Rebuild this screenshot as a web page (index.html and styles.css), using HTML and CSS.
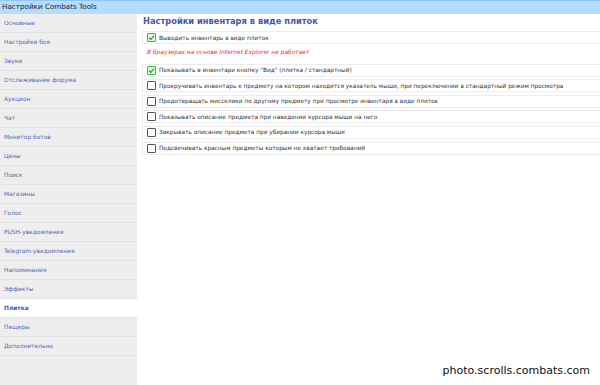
FILE: index.html
```html
<!DOCTYPE html>
<html lang="ru">
<head>
<meta charset="utf-8">
<title>Настройки Combats Tools</title>
<link rel="stylesheet" href="styles.css">
</head>
<body>
<div class="header">Настройки Combats Tools</div>
<div class="layout">
  <nav class="sidebar">
    <div class="nav-item">Основные</div>
    <div class="nav-item">Настройки боя</div>
    <div class="nav-item">Звуки</div>
    <div class="nav-item">Отслеживание форума</div>
    <div class="nav-item">Аукцион</div>
    <div class="nav-item">Чат</div>
    <div class="nav-item">Монитор ботов</div>
    <div class="nav-item">Цены</div>
    <div class="nav-item">Поиск</div>
    <div class="nav-item">Магазины</div>
    <div class="nav-item">Голос</div>
    <div class="nav-item">PUSH-уведомления</div>
    <div class="nav-item">Telegram-уведомления</div>
    <div class="nav-item">Напоминания</div>
    <div class="nav-item">Эффекты</div>
    <div class="nav-item active">Плитка</div>
    <div class="nav-item">Пещеры</div>
    <div class="nav-item">Дополнительно</div>
  </nav>
  <main class="content">
    <h1 class="title">Настройки инвентаря в виде плиток</h1>
    <div class="row"><span class="cb checked"><svg viewBox="0 0 9 9" width="9" height="9"><path d="M2 4.6 L3.8 6.4 L7 2.6" fill="none" stroke="#2fa82f" stroke-width="1.4"/></svg></span>Выводить инвентарь в виде плиток</div>
    <div class="note">В браузерах на основе Internet Explorer не работает</div>
    <div class="row"><span class="cb checked"><svg viewBox="0 0 9 9" width="9" height="9"><path d="M2 4.6 L3.8 6.4 L7 2.6" fill="none" stroke="#2fa82f" stroke-width="1.4"/></svg></span>Показывать в инвентаре кнопку "Вид" (плитка / стандартный)</div>
    <div class="row"><span class="cb"></span>Прокручивать инвентарь к предмету на котором находится указатель мыши, при переключении в стандартный режим просмотра</div>
    <div class="row"><span class="cb"></span>Предотвращать миссклики по другому предмету при просмотре инвентаря в виде плиток</div>
    <div class="row"><span class="cb"></span>Показывать описание предмета при наведении курсора мыши на него</div>
    <div class="row"><span class="cb"></span>Закрывать описание предмета при убирании курсора мыши</div>
    <div class="row"><span class="cb"></span>Подсвечивать красным предметы которым не хватает требований</div>
  </main>
</div>
<div class="watermark">photo.scrolls.combats.com</div>
</body>
</html>
```
FILE: styles.css
```css
* { box-sizing: border-box; }
html, body { margin: 0; padding: 0; height: 100%; }
body {
  font-family: "DejaVu Sans", Verdana, sans-serif;
  background: #fff;
  overflow: hidden;
  position: relative;
}
.header {
  height: 14px;
  border-top: 1px solid #95c3ea;
  background: #b5dcff;
  color: #222;
  font-size: 7.2px;
  line-height: 12px;
  padding-left: 2px;
}
.layout {
  display: flex;
  height: calc(100% - 14px);
}
.sidebar {
  width: 137px;
  flex: none;
  background: #eeeeee;
}
.nav-item {
  height: 19px;
  line-height: 18px;
  padding-left: 4px;
  font-size: 5.9px;
  color: #5a68b5;
  border-bottom: 1px solid #e2e2e2;
}
.nav-item.active {
  background: #fff;
  font-weight: bold;
  color: #4450b8;
}
.content {
  flex: 1;
  padding: 1px 0 0 5px;
  min-width: 0;
}
.title {
  margin: 0 0 4px 1px;
  font-size: 8.3px;
  line-height: 12px;
  font-weight: bold;
  color: #4454b8;
}
.row {
  display: flex;
  align-items: center;
  height: 13px;
  margin-bottom: 2.6px;
  padding-left: 4px;
  border: 1px solid #ececec;
  border-right: none;
  font-size: 5.8px;
  color: #333;
  white-space: nowrap;
}
.cb {
  width: 9px;
  height: 9px;
  flex: none;
  margin-right: 3px;
  border: 1px solid #555;
  border-radius: 1px;
  background: #fff;
  position: relative;
}
.cb svg { position: absolute; left: -1px; top: -1px; }
.cb.checked {
  border-color: #3cb83c;
  background: #eaffea;
}
.note {
  height: 17px;
  line-height: 10px;
  padding: 0 0 0 5px;
  font-size: 5.9px;
  font-style: italic;
  color: #f22;
}
.watermark {
  position: absolute;
  right: 10px;
  bottom: 8px;
  font-size: 11px;
  color: #111;
  text-shadow: 0 0 2px #fff;
}
```
